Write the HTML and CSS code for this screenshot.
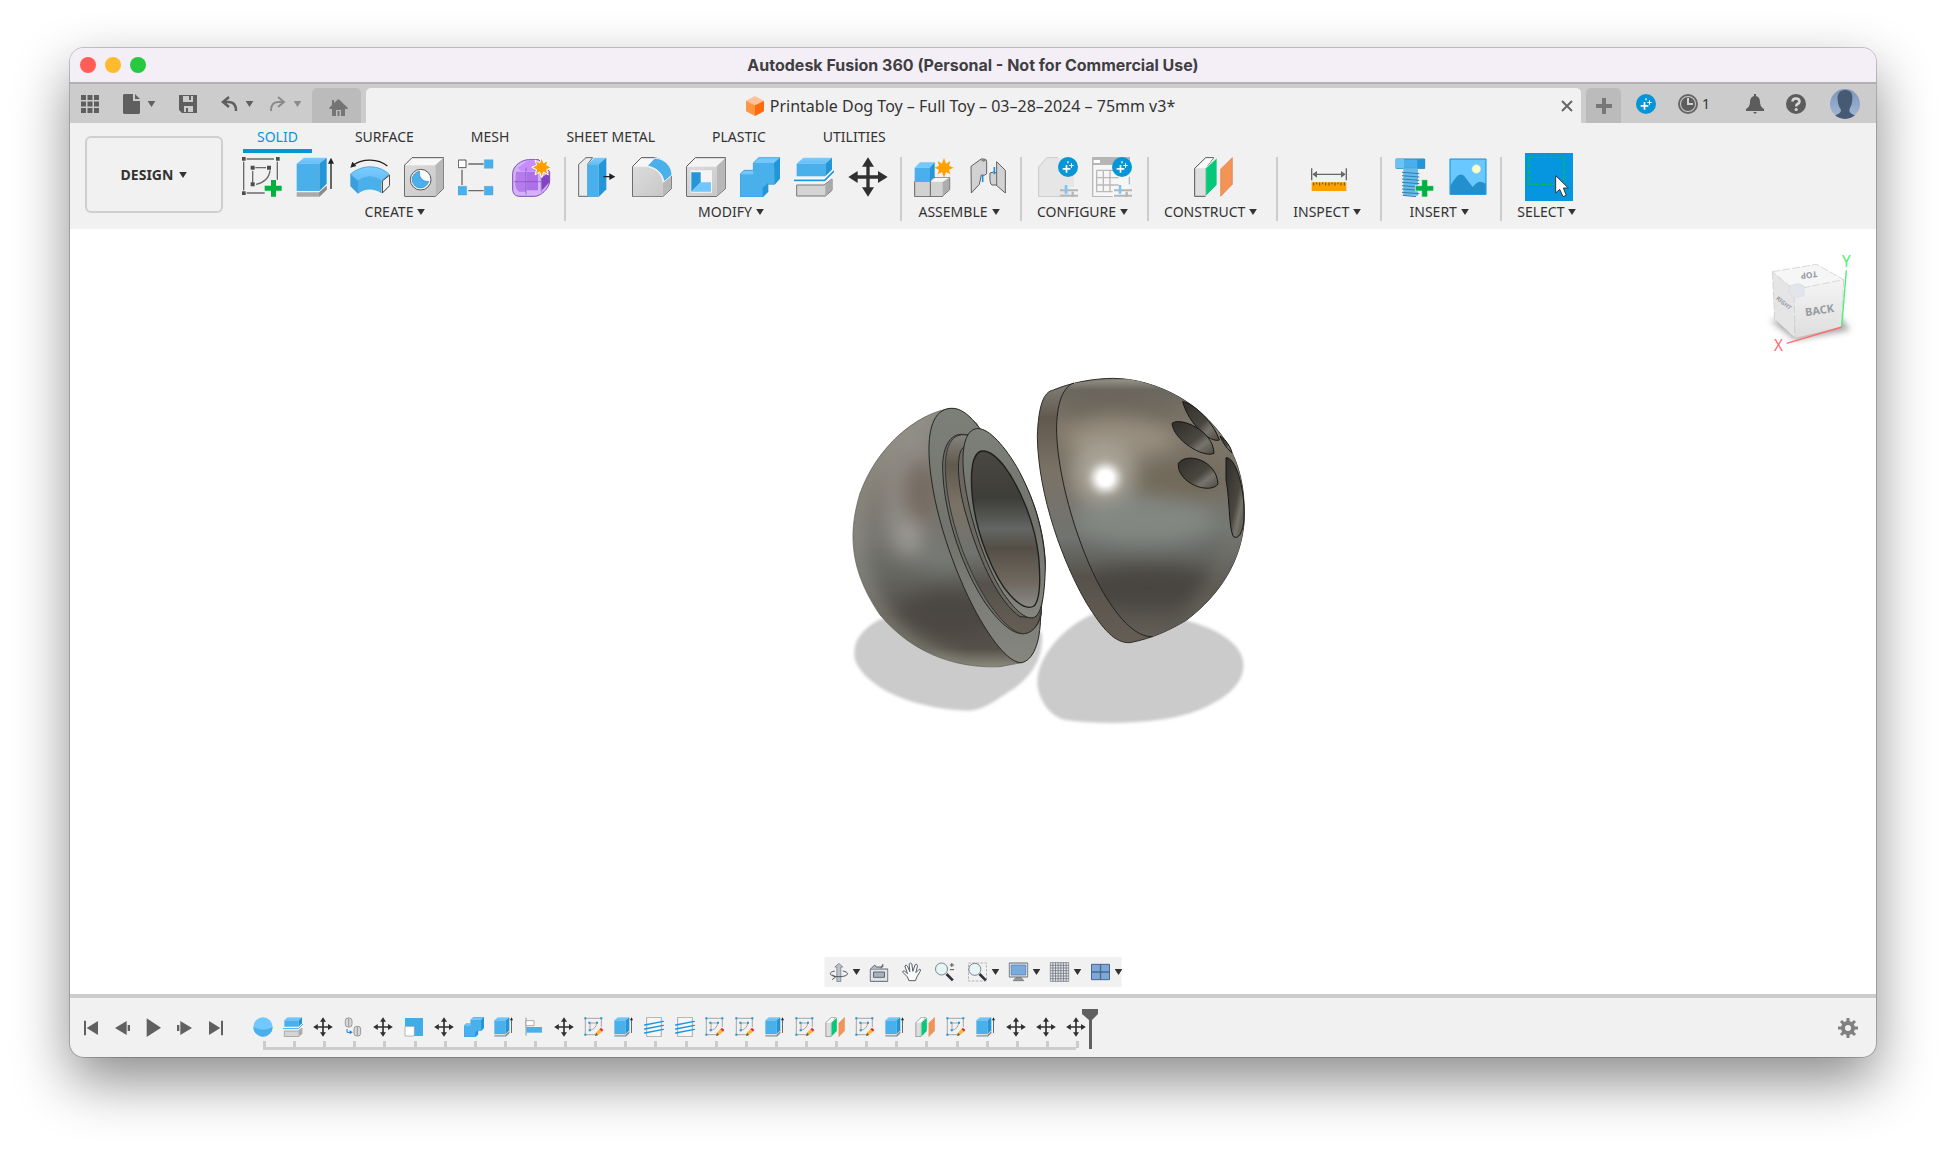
FILE: index.html
```html
<!DOCTYPE html>
<html lang="en">
<head>
<meta charset="utf-8">
<title>Autodesk Fusion 360</title>
<link rel="stylesheet" href="styles.css">
</head>
<body>
<svg class="sprite" aria-hidden="true">
  <defs>
    <linearGradient id="blue-top" x1="0" y1="0" x2="0" y2="1"><stop offset="0" stop-color="#7cccff"/><stop offset="1" stop-color="#63bef5"/></linearGradient>
    <linearGradient id="grey-face" x1="0" y1="0" x2="1" y2="1"><stop offset="0" stop-color="#dcdcdc"/><stop offset="1" stop-color="#c8c8c8"/></linearGradient>
  </defs>
  <symbol id="caret" viewBox="0 0 9 7"><path d="M0 0H9L4.500 7Z" fill="currentColor"/></symbol>
  <symbol id="sketch-new" viewBox="0 0 120 120">
    <g fill="none" stroke="#6a6a6a" stroke-width="4"><path d="M14 6H96M5 14V100M106 14V68M14 108H68M40 32H72M32 42V76M84 40C82 62 66 78 42 82"/></g>
    <path d="M0 0h11v11H0zM102 0h11v11h-11zM0 103h11v11H0zM26 26h12v12H26zM75 26h12v12H75zM26 76h12v12H26z" fill="#4d4d4d"/>
    <path d="M87 69h15v17h17v15h-17v18H87v-18H68V86h19z" fill="#00b140"/>
  </symbol>
  <symbol id="extrude" viewBox="0 0 120 120">
    <path d="M2 106H70L92 86V98L70 119H2Z" fill="#aaa"/><path d="M70 106L92 86V98L70 119Z" fill="#8b8b8b"/>
    <path d="M2 20L24 2H92L70 20Z" fill="url(#blue-top)"/><path d="M2 20H70V102H2Z" fill="#4ab0ec"/><path d="M70 20L92 2V80L70 102Z" fill="#2296d6"/>
    <path d="M105 96V16" stroke="#222" stroke-width="4"/><path d="M96 20L105 2L114 20Z" fill="#222"/>
  </symbol>
  <symbol id="revolve" viewBox="0 0 120 120">
    <path d="M10 24C38 4 84 4 112 27" fill="none" stroke="#222" stroke-width="4"/><path d="M1 32L7 14L19 27Z" fill="#222"/>
    <path d="M1 52C34 22 88 22 117 52L94 72C72 56 46 56 24 72Z" fill="url(#blue-top)" stroke="#2a93d0" stroke-width="2"/>
    <path d="M1 52L24 72V110L1 88Z" fill="#3a9fdc"/><path d="M24 72C46 56 72 56 94 72V109C72 94 46 94 24 110Z" fill="#4ab0ec"/>
    <path d="M97 72L119 54V86L97 108Z" fill="#f2f2f2" stroke="#333" stroke-width="3"/>
  </symbol>
  <symbol id="hole" viewBox="0 0 120 120">
    <path d="M2 24L24 2H119V94L94 118H2Z" fill="#f7f7f7" stroke="#555" stroke-width="3"/><path d="M3 25H94V117H3Z" fill="url(#grey-face)"/><path d="M94 24L118 3V93L94 117Z" fill="#b8b8b8"/>
    <circle cx="50" cy="68" r="31" fill="#fafafa" stroke="#555" stroke-width="3"/><path d="M47 43A25 25 0 1 0 74 73A24 24 0 0 1 47 43Z" fill="#4ab0ec" stroke="#2a86bd" stroke-width="2"/>
  </symbol>
  <symbol id="pattern" viewBox="0 0 120 120">
    <path d="M31 21H77M31 101H77M12 38V84" stroke="#6a6a6a" stroke-width="4"/><path d="M1 9h23v23H1z" fill="#fff" stroke="#555" stroke-width="3"/><path d="M79 8h26v26H79zM0 88h26v26H0zM79 88h26v26H79z" fill="#4ab0ec" stroke="#3797d3" stroke-width="1"/>
  </symbol>
  <symbol id="form" viewBox="0 0 120 120">
    <path d="M2 50C2 26 30 8 50 8H80L113 44V72C112 96 84 118 68 118H24C8 118 2 108 2 96Z" fill="#d3b2f7" stroke="#7f4bb8" stroke-width="3"/>
    <path d="M18 32L48 10H78L88 36L76 42H26Z" fill="#c98cff"/><path d="M12 44H42V104H22Q8 96 10 72Z" fill="#b57cee"/><path d="M44 44H78V100H44Z" fill="#ad70e8"/><path d="M88 62L112 46V76L90 100Z" fill="#8244c4"/>
    <path d="M42 32V112M6 74H88M88 60V104" stroke="#7f4bb8" stroke-width="2"/>
    <path d="M89 0L95 18L109 9L104 24L119 31L104 38L109 54L95 45L89 62L83 45L69 54L74 38L59 31L74 24L69 9L83 18Z" fill="#ffa000" stroke="#fff" stroke-width="3"/>
  </symbol>
  <symbol id="press" viewBox="0 0 120 120">
    <path d="M2 22L24 2H44L30 20V118H2Z" fill="#ececec" stroke="#666" stroke-width="3"/><path d="M29 22L50 2H85L62 22Z" fill="url(#blue-top)"/><path d="M28 22H62V120H28Z" fill="#4ab0ec"/><path d="M62 22L85 2V97L62 120Z" fill="#2296d6"/>
    <path d="M76 59H98" stroke="#222" stroke-width="4"/><path d="M94 49L112 59L94 69Z" fill="#222"/>
  </symbol>
  <symbol id="fillet" viewBox="0 0 120 120">
    <path d="M2 28L28 2H68C100 8 119 30 119 60V94L92 119H2Z" fill="#f7f7f7" stroke="#555" stroke-width="3"/><path d="M3 29H42C74 34 92 54 92 78V118H3Z" fill="url(#grey-face)"/><path d="M92 78L118 56V93L92 117Z" fill="#b8b8b8"/><path d="M46 27L68 3C102 6 119 30 120 54L96 74C92 48 72 32 46 27Z" fill="#4ab0ec" stroke="#f1f1f1" stroke-width="3"/>
  </symbol>
  <symbol id="shell" viewBox="0 0 120 120">
    <path d="M2 28L28 2H119V94L92 118H2Z" fill="#f4f4f4" stroke="#555" stroke-width="3"/><path d="M3 29H92V117H3Z" fill="url(#grey-face)"/><path d="M92 28L118 3V93L92 117Z" fill="#b8b8b8"/><path d="M14 40H78V107H14Z" fill="#f4f4f4"/><path d="M16 46H44V76L16 104Z" fill="#2296d6"/><path d="M44 76H75V104H16Z" fill="#70c6fd"/>
  </symbol>
  <symbol id="combine" viewBox="0 0 120 120">
    <path d="M0 52L12 40H40V18L56 2H120V64L104 82H84V104L68 120H0Z" fill="#4ab0ec"/><path d="M0 52L12 40H40V52ZM40 18L56 2H120L102 18Z" fill="#74c8ff"/><path d="M102 18L120 2V64L104 82ZM68 92L84 78V104L68 120Z" fill="#2296d6"/><path d="M0 52L12 40H40V18L56 2H120V64L104 82H84V104L68 120H0Z" fill="none" stroke="#2d94cf" stroke-width="2"/>
  </symbol>
  <symbol id="split" viewBox="0 0 120 120">
    <path d="M8 20L28 2H114L94 20Z" fill="url(#blue-top)"/><path d="M8 20H94V58H8Z" fill="#4ab0ec"/><path d="M94 20L114 2V38L94 58Z" fill="#2296d6"/><path d="M8 84H90L114 66V100L94 117H8Z" fill="#d4d4d4" stroke="#777" stroke-width="3"/><path d="M94 84L113 66V100L94 115Z" fill="#aaa"/><path d="M0 70H92L120 42" fill="none" stroke="#fff" stroke-width="11"/><path d="M0 70H92L120 42" fill="none" stroke="#1696e6" stroke-width="5"/>
  </symbol>
  <symbol id="move" viewBox="0 0 120 120"><path d="M60 1L78 29H65V55H90V42L119 60L90 78V65H65V91H78L60 119L42 91H55V65H29V78L1 60L29 42V55H55V29H42Z" fill="#303030"/></symbol>
  <symbol id="assemble" viewBox="0 0 120 120">
    <path d="M2 74V119H84L107 98V62H54Z" fill="#d2d2d2" stroke="#666" stroke-width="3"/><path d="M50 74H86L106 62H64Z" fill="#f7f7f7"/><path d="M86 76L106 62V97L86 118Z" fill="#adadad"/><path d="M49 72V119" stroke="#666" stroke-width="3"/><path d="M2 32L18 16H62L50 32Z" fill="#74c8ff"/><path d="M2 32H48V75H2Z" fill="#4ab0ec"/><path d="M48 32L62 16V58L48 75Z" fill="#2296d6"/>
    <path d="M90 2L96 20L109 12L105 26L119 32L105 38L109 52L96 45L90 62L84 45L71 52L75 38L61 32L75 26L71 12L84 20Z" fill="#ffa000"/>
  </symbol>
  <symbol id="joint" viewBox="0 0 120 120">
    <g fill="#d2d2d2" stroke="#606060" stroke-width="3"><path d="M9 28L34 10Q38 4 48 6Q56 6 56 14V50Q50 58 40 54L34 82L10 108Z"/><path d="M86 14L112 40V108L84 84L72 84Q64 82 66 48Q76 42 86 48Z"/></g><path d="M38 10Q46 2 55 10Q48 18 38 10Z" fill="#888"/><path d="M86 48V84" stroke="#666" stroke-width="3"/><path d="M44 54V75M79 30V52" stroke="#1696e6" stroke-width="5"/>
  </symbol>
  <symbol id="badge" viewBox="0 0 60 60"><circle cx="30" cy="30" r="30" fill="#0696d7"/><path d="M23 24h5v9h9v5h-9v9h-5v-9h-9v-5h9zM39 19h3v5h5v3h-5v5h-3v-5h-5v-3h5zM28 13h4v6h-4z" fill="#fff"/></symbol>
  <symbol id="configure" viewBox="0 0 120 120">
    <path d="M2 30L26 3H94L108 20V90H94V119H2Z" fill="#e6e6e6"/><path d="M60 2H26L2 30V119H66" fill="none" stroke="#c9c9c9" stroke-width="3"/><path d="M66 100H120M66 116H120" stroke="#b5b5b5" stroke-width="6"/><path d="M84 84V110" stroke="#7cc5f5" stroke-width="8"/><path d="M104 104V120" stroke="#b5b5b5" stroke-width="7"/><use href="#badge" x="60" y="0" width="60" height="60"/>
  </symbol>
  <symbol id="table" viewBox="0 0 120 120">
    <path d="M2 2H112V119H2Z" fill="#f6f6f6"/><path d="M0 0H114V24H0Z" fill="#b5b5b5"/><path d="M5 9H24V18H5Z" fill="#fff"/><path d="M2 24V119H62M112 60V82M14 40H68M14 62H80M14 84H80M14 104H62M14 40V104M34 40V104M54 40V104" fill="none" stroke="#b9b9b9" stroke-width="4"/><path d="M66 100H120M66 116H120" stroke="#b5b5b5" stroke-width="6"/><path d="M84 84V110" stroke="#7cc5f5" stroke-width="8"/><path d="M104 104V120" stroke="#b5b5b5" stroke-width="7"/><use href="#badge" x="60" y="0" width="60" height="60"/>
  </symbol>
  <symbol id="plane" viewBox="0 0 120 120">
    <path d="M5 34L38 2H62L38 34V118H5Z" fill="#dedede" stroke="#555" stroke-width="3"/><path d="M8 34L40 4H60L38 34Z" fill="#fafafa"/><path d="M38 34L72 2V84L38 118Z" fill="#06c878" stroke="#fff" stroke-width="2"/><path d="M83 36L118 2V82L83 118Z" fill="#f39356" stroke="#d98049" stroke-width="2"/>
  </symbol>
  <symbol id="inspect" viewBox="0 0 120 120"><path d="M8 34V70M112 34V70M14 52H106" stroke="#666" stroke-width="4"/><path d="M10 52L24 42V62ZM110 52L96 42V62Z" fill="#666"/><path d="M8 76H112V102H8Z" fill="#ffa000"/><path d="M14 76v10M23 76v6M32 76v10M41 76v6M50 76v10M60 76v10M69 76v6M78 76v10M87 76v6M96 76v10M106 76v10" stroke="#704d14" stroke-width="3"/></symbol>
  <symbol id="bolt" viewBox="0 0 120 120">
    <path d="M6 6H92V34H6Z" fill="#4ab0ec" stroke="#2a86bd" stroke-width="3"/><path d="M6 6H30V34H6Z" fill="#6bc2f6"/><path d="M70 6H92V34H70Z" fill="#2296d6"/><path d="M28 34H72V116H28Z" fill="#63bbee"/><path d="M24 46L76 50M24 56L76 60M24 66L76 70M24 76L76 80M24 86L76 90M24 96L76 100M24 106L76 110M26 115L66 119" stroke="#397da6" stroke-width="3"/><path d="M83 68h18v18h18v16h-18v18H83v-18H64V86h19z" fill="#00b140" stroke="#f1f1f1" stroke-width="2"/>
  </symbol>
  <symbol id="picture" viewBox="0 0 120 120"><path d="M6 6H114V112H6Z" fill="#68c8ff" stroke="#0c8fd6" stroke-width="3"/><path d="M7 86C26 56 34 46 48 56L74 90C88 72 98 70 113 80V111H7Z" fill="#2390cd"/><circle cx="85" cy="36" r="13" fill="#ffffc8" stroke="#cce1c7" stroke-width="2"/></symbol>
  <symbol id="select" viewBox="0 0 144 144"><path d="M13 13H117V94H13Z" fill="none" stroke="#00c24a" stroke-width="4" stroke-dasharray="13 7"/><path d="M92 68V120L104 109L114 131L124 127L115 105H130Z" fill="#fff" stroke="#333" stroke-width="3"/></symbol>
  <symbol id="t-sketch" viewBox="0 0 60 60"><path d="M4 4H52V30M4 4V53H34M16 18H38Q36 36 18 40V18" fill="none" stroke="#808080" stroke-width="2"/><path d="M1 1h6v6H1zM49 1h6v6h-6zM1 50h6v6H1zM13 14h6v6h-6zM36 14h6v6h-6zM14 37h6v6h-6z" fill="#1696e6"/><path d="M33 57L36 47L46 37L54 44L42 54Z" fill="#ffb62e"/><path d="M46 37L51 32L58 39L54 44Z" fill="#f02b2b"/><path d="M33 57L36 47L42 54Z" fill="#555"/></symbol>
  <symbol id="t-thread" viewBox="0 0 60 60"><path d="M8 1H52V59H8Z" fill="#f6f6f6" stroke="#888" stroke-width="2"/><path d="M2 24L58 13M2 36L58 25M2 48L58 37" stroke="#1696e6" stroke-width="4" stroke-linecap="round"/></symbol>
  <symbol id="t-sphere" viewBox="0 0 60 60"><circle cx="30" cy="30" r="29" fill="#70c8ff"/><path d="M1 30Q30 46 59 30A29 29 0 0 1 1 30Z" fill="#4ab0ec"/></symbol>
  <symbol id="t-scale" viewBox="0 0 60 60"><path d="M3 3H57V57H3Z" fill="#42abe9"/><path d="M3 28H31V57H3Z" fill="#fff" stroke="#999" stroke-width="2"/></symbol>
  <symbol id="t-align" viewBox="0 0 60 60"><path d="M6 2V56" stroke="#999" stroke-width="3"/><path d="M6 11H30V26H6Z" fill="#fff" stroke="#888" stroke-width="2"/><path d="M7 30H54V47H7Z" fill="#4ab0ec"/></symbol>
  <symbol id="t-copy" viewBox="0 0 60 60"><g fill="#d8d8dc" stroke="#777" stroke-width="2"><rect x="7" y="3" width="20" height="27" rx="8"/><rect x="33" y="28" width="20" height="29" rx="8"/><path d="M17 5V28M43 30V55"/></g><path d="M12 36V46H22" fill="none" stroke="#1c7fd8" stroke-width="3"/><path d="M20 40L29 46L20 52Z" fill="#1c7fd8"/></symbol>
</svg>

<main class="window">
  <header class="titlebar">
    <div class="lights"><button class="light light-close" aria-label="Close window"></button><button class="light light-min" aria-label="Minimise"></button><button class="light light-max" aria-label="Zoom"></button></div>
    <h1>Autodesk Fusion 360 (Personal - Not for Commercial Use)</h1>
  </header>

  <div class="appbar">
    <div class="quick">
      <button class="q-grid" aria-label="Data panel"><svg width="18" height="18" viewBox="0 0 18 18" fill="#5f5f5f"><path d="M0 0h5v5H0zM6.500 0h5v5h-5zM13 0h5v5h-5zM0 6.500h5v5H0zM6.500 6.500h5v5h-5zM13 6.500h5v5h-5zM0 13h5v5H0zM6.500 13h5v5h-5zM13 13h5v5h-5z"/></svg></button>
      <button class="q-file" aria-label="File"><svg width="17" height="20" viewBox="0 0 17 20" fill="#5f5f5f"><path d="M1 0H10V7H17V19L16 20H1L0 19V1ZM12 0L17 5H12Z"/></svg><svg class="caret"><use href="#caret"/></svg></button>
      <button class="q-save" aria-label="Save"><svg width="18" height="18" viewBox="0 0 18 18"><path d="M0 0H18V18H3L0 15Z" fill="#5f5f5f"/><path d="M4 1H14V7H4ZM5 11H14V17H5Z" fill="#ccc"/><path d="M10 1H12V5H10ZM7 13H9V17H7Z" fill="#5f5f5f"/></svg></button>
      <button class="q-undo" aria-label="Undo"><svg width="17" height="15" viewBox="0 0 17 15"><path d="M8 1L2 6L8 11M2 6H8Q15 6 15 15" fill="none" stroke="#5f5f5f" stroke-width="2.500"/></svg><svg class="caret"><use href="#caret"/></svg></button>
      <button class="q-redo" aria-label="Redo"><svg width="17" height="15" viewBox="0 0 17 15"><path d="M9 1L15 6L9 11M15 6H9Q2 6 2 15" fill="none" stroke="currentColor" stroke-width="2"/></svg><svg class="caret"><use href="#caret"/></svg></button>
    </div>
    <button class="tab home" aria-label="Home"><svg width="19" height="17" viewBox="0 0 19 17" fill="#757575"><path d="M9.500 0L19 9L18 10H16V17H12V11H7V17H3V10H1L0 9L3 6V1H5V4ZM8.500 12H10.500V17H8.500Z"/></svg></button>
    <div class="tab document">
      <svg width="18" height="20" viewBox="0 0 54 60"><path d="M27 0L54 14L27 28L0 14Z" fill="#ffc197"/><path d="M0 14L27 28V60L0 46Z" fill="#ff9540"/><path d="M54 14L27 28V60L54 46Z" fill="#ff6a0d"/></svg>
      <span>Printable Dog Toy – Full Toy – 03–28–2024 – 75mm v3*</span>
      <button class="close" aria-label="Close tab"><svg width="12" height="12" viewBox="0 0 12 12"><path d="M1 1L11 11M11 1L1 11" stroke="#666" stroke-width="2"/></svg></button>
    </div>
    <button class="tab plus" aria-label="New design"><svg width="16" height="16" viewBox="0 0 16 16"><path d="M8 0V16M0 8H16" stroke="#777" stroke-width="4"/></svg></button>
    <div class="account">
      <button aria-label="Extensions"><svg width="20" height="20"><use href="#badge"/></svg></button>
      <button class="jobs"><svg width="20" height="20" viewBox="0 0 20 20"><circle cx="10" cy="10" r="9" fill="none" stroke="#666" stroke-width="2"/><circle cx="10" cy="10" r="7" fill="#5c5c5c"/><path d="M10 4V10H15" fill="none" stroke="#d2d2d2" stroke-width="2"/></svg>1</button>
      <button class="bell" aria-label="Notifications"><svg width="18" height="20" viewBox="0 0 18 20" fill="#5c5c5c"><path d="M8 0H10V2Q14 3 14 8Q14 13 18 15V17H0V15Q4 13 4 8Q4 3 8 2ZM7 18H11L9 20Z"/></svg></button>
      <button class="help" aria-label="Help"><svg width="20" height="20" viewBox="0 0 20 20"><circle cx="10" cy="10" r="10" fill="#5c5c5c"/><path d="M6.500 7.500Q6.500 4.500 10 4.500Q13.500 4.500 13.500 7.500Q13.500 9 11.500 10Q10.200 10.700 10.200 12.500" fill="none" stroke="#d8d8d8" stroke-width="2.600"/><circle cx="10.200" cy="15.500" r="1.600" fill="#d8d8d8"/></svg></button>
      <button class="avatar" aria-label="Profile"><svg width="30" height="30" viewBox="0 0 90 90"><defs><linearGradient id="sky" x1="0" y1="0" x2="0" y2="1"><stop offset="0" stop-color="#7b97bb"/><stop offset="1" stop-color="#a5b9d5"/></linearGradient><clipPath id="disc"><circle cx="45" cy="45" r="45"/></clipPath></defs><g clip-path="url(#disc)"><path d="M0 0H90V90H0Z" fill="url(#sky)"/><path d="M45 3C62 3 69 14 67 32C66 48 60 56 58 62C58 72 66 76 80 80V90H10V80C24 76 33 72 33 62C28 56 24 46 23 32C21 14 30 3 45 3Z" fill="#475a73"/></g></svg></button>
    </div>
  </div>

  <div class="ribbon">
    <button class="workspace">DESIGN <svg class="caret"><use href="#caret"/></svg></button>
    <div class="tools">
      <nav class="modes"><a class="active" href="#solid">SOLID</a><a href="#surface">SURFACE</a><a href="#mesh">MESH</a><a href="#sheet">SHEET METAL</a><a href="#plastic">PLASTIC</a><a href="#utilities">UTILITIES</a></nav>
      <div class="panels">
        <section class="panel"><div class="icons"><button aria-label="Create sketch"><svg><use href="#sketch-new"/></svg></button><button aria-label="Extrude"><svg><use href="#extrude"/></svg></button><button aria-label="Revolve"><svg><use href="#revolve"/></svg></button><button aria-label="Hole"><svg><use href="#hole"/></svg></button><button aria-label="Pattern"><svg><use href="#pattern"/></svg></button><button aria-label="Create form"><svg><use href="#form"/></svg></button></div><button class="label">CREATE<svg class="caret"><use href="#caret"/></svg></button></section>
        <section class="panel"><div class="icons"><button aria-label="Press pull"><svg><use href="#press"/></svg></button><button aria-label="Fillet"><svg><use href="#fillet"/></svg></button><button aria-label="Shell"><svg><use href="#shell"/></svg></button><button aria-label="Combine"><svg><use href="#combine"/></svg></button><button aria-label="Split body"><svg><use href="#split"/></svg></button><button aria-label="Move"><svg><use href="#move"/></svg></button></div><button class="label">MODIFY<svg class="caret"><use href="#caret"/></svg></button></section>
        <section class="panel"><div class="icons"><button aria-label="New component"><svg><use href="#assemble"/></svg></button><button aria-label="Joint"><svg><use href="#joint"/></svg></button></div><button class="label">ASSEMBLE<svg class="caret"><use href="#caret"/></svg></button></section>
        <section class="panel"><div class="icons"><button aria-label="Configure"><svg><use href="#configure"/></svg></button><button aria-label="Configuration table"><svg><use href="#table"/></svg></button></div><button class="label">CONFIGURE<svg class="caret"><use href="#caret"/></svg></button></section>
        <section class="panel"><div class="icons"><button aria-label="Offset plane"><svg><use href="#plane"/></svg></button></div><button class="label">CONSTRUCT<svg class="caret"><use href="#caret"/></svg></button></section>
        <section class="panel"><div class="icons"><button aria-label="Measure"><svg><use href="#inspect"/></svg></button></div><button class="label">INSPECT<svg class="caret"><use href="#caret"/></svg></button></section>
        <section class="panel"><div class="icons"><button aria-label="Insert fastener"><svg><use href="#bolt"/></svg></button><button aria-label="Canvas"><svg><use href="#picture"/></svg></button></div><button class="label">INSERT<svg class="caret"><use href="#caret"/></svg></button></section>
        <section class="panel"><div class="icons"><button class="selected" aria-label="Select"><svg><use href="#select"/></svg></button></div><button class="label">SELECT<svg class="caret"><use href="#caret"/></svg></button></section>
      </div>
    </div>
  </div>

  <section class="viewport">
    <svg class="model" viewBox="0 0 1350 1200" role="img" aria-label="Two halves of a ball toy">
      <defs>
        <linearGradient id="shade-left" x1="0" y1="0" x2="0" y2="1"><stop offset="0" stop-color="#8c8a82"/><stop offset=".3" stop-color="#7c756b"/><stop offset=".5" stop-color="#777671"/><stop offset=".65" stop-color="#656661"/><stop offset=".8" stop-color="#504c46"/><stop offset=".93" stop-color="#56524a"/><stop offset="1" stop-color="#8c8a7c"/></linearGradient>
        <linearGradient id="shade-right" x1="0" y1="0" x2="0" y2="1"><stop offset="0" stop-color="#a3a296"/><stop offset=".05" stop-color="#6b685f"/><stop offset=".18" stop-color="#807669"/><stop offset=".4" stop-color="#777165"/><stop offset=".56" stop-color="#757874"/><stop offset=".66" stop-color="#686966"/><stop offset=".8" stop-color="#4e4b45"/><stop offset="1" stop-color="#66625a"/></linearGradient>
        <linearGradient id="bore" x1="0" y1="0" x2="0" y2="1"><stop offset="0" stop-color="#4a4843"/><stop offset=".3" stop-color="#3d3d39"/><stop offset=".5" stop-color="#636663"/><stop offset=".62" stop-color="#544f46"/><stop offset=".85" stop-color="#716a61"/><stop offset="1" stop-color="#8a8a85"/></linearGradient>
        <linearGradient id="rim" x1="0" y1="0" x2="0" y2="1"><stop offset="0" stop-color="#7d7f79"/><stop offset=".5" stop-color="#72736d"/><stop offset="1" stop-color="#85877f"/></linearGradient>
        <linearGradient id="band" x1="0" y1="0" x2="0" y2="1"><stop offset="0" stop-color="#84847e"/><stop offset=".15" stop-color="#62594e"/><stop offset=".35" stop-color="#7b7266"/><stop offset=".6" stop-color="#707370"/><stop offset=".75" stop-color="#56524b"/><stop offset="1" stop-color="#655e55"/></linearGradient>
        <linearGradient id="pit" x1="0" y1="0" x2="1" y2="1"><stop offset="0" stop-color="#302e29"/><stop offset=".55" stop-color="#4a4740"/><stop offset=".72" stop-color="#77746c"/><stop offset="1" stop-color="#4c4942"/></linearGradient>
        <filter id="soft" x="-50%" y="-50%" width="200%" height="200%" color-interpolation-filters="sRGB"><feGaussianBlur stdDeviation="30"/></filter>
        <filter id="edge" x="-10%" y="-10%" width="120%" height="120%"><feGaussianBlur stdDeviation="4"/></filter>
        <filter id="spark" x="-50%" y="-50%" width="200%" height="200%"><feGaussianBlur stdDeviation="13"/></filter>
        <path id="left-body" d="M392 175C290 190 170 290 120 430C80 560 95 670 180 795C290 925 430 955 540 950L605 938L640 900L560 400L470 220Z"/>
        <path id="right-body" d="M700 120C760 95 830 85 880 85C970 86 1050 122 1100 155C1160 195 1215 260 1236 308C1266 370 1276 440 1272 520C1262 630 1205 730 1100 810C1050 840 1000 864 930 878C885 880 850 840 800 760C730 640 655 440 652 260C655 170 670 125 700 120Z"/>
        <path id="cap" d="M762 99C722 112 708 180 710 250C715 400 780 600 840 710C890 800 945 862 998 860L1300 860V60Z"/>
        <clipPath id="clip-left"><use href="#left-body"/></clipPath><clipPath id="clip-right"><use href="#right-body"/></clipPath><clipPath id="clip-cap"><use href="#cap"/></clipPath>
      </defs>
      <g fill="#cbcbcb" filter="url(#edge)"><path d="M180 808C120 840 95 880 105 930C135 1010 270 1075 440 1082C500 1080 540 1040 590 1010C640 970 672 920 665 850L600 800Z"/><path d="M820 792C730 830 650 920 652 1000C655 1050 690 1100 735 1110C850 1125 1010 1122 1110 1090C1210 1055 1275 1005 1270 940C1265 880 1190 835 1095 810Z"/></g>
      <g clip-path="url(#clip-left)"><use href="#left-body" fill="url(#shade-left)"/><g filter="url(#soft)"><path d="M340 175C200 240 80 420 100 600C140 790 240 900 400 950" fill="none" stroke="#95958a" stroke-width="36"/><path d="M330 215C230 270 190 350 190 450Q200 600 260 620Q310 600 290 500Q250 420 330 320Z" fill="#979490" opacity=".7"/><ellipse cx="295" cy="430" rx="40" ry="100" fill="#74695f"/><ellipse cx="270" cy="560" rx="32" ry="60" fill="#a09e99"/><ellipse cx="370" cy="620" rx="80" ry="30" fill="#7a7e7a"/><ellipse cx="390" cy="790" rx="140" ry="70" fill="#4b4742"/></g></g>
      <use href="#left-body" fill="none" stroke="#55554e" stroke-width="2"/>
      <path d="M392 175C340 178 322 240 328 330C338 480 400 660 470 790C520 880 570 940 605 938C640 930 660 880 662 800L676 640C672 540 640 420 560 310L480 236C450 195 420 172 392 175Z" fill="url(#rim)" stroke="#262622" stroke-width="3"/>
      <path d="M450 257C400 240 372 275 368 340C366 470 420 640 490 750C530 810 580 860 618 850C640 845 660 820 664 790L620 500Z" fill="#6b6e67" stroke="#262622" stroke-width="3"/>
      <path d="M450 257C402 245 380 275 376 340C374 470 430 640 500 750C540 810 585 858 618 850C640 845 660 820 664 780L620 500Z" fill="url(#band)" stroke="#35342f" stroke-width="3"/>
      <path d="M434 290C405 300 412 410 440 500C480 640 540 760 600 800L640 803L500 500Z" fill="#6a6861" stroke="#262622" stroke-width="3"/>
      <path d="M470 236C437 240 425 290 430 360C440 480 490 640 550 730C585 780 615 808 640 803C664 796 674 740 676 650C672 540 640 440 590 350C545 275 500 232 470 236Z" fill="url(#rim)" stroke="#262622" stroke-width="3"/>
      <path d="M488 303C455 305 450 370 457 440C468 550 520 680 570 735C600 768 625 778 642 768C660 750 662 690 656 620C645 520 600 410 550 345C525 315 505 302 488 303Z" fill="url(#bore)" stroke="#1e1e1b" stroke-width="4"/>
      <use href="#right-body" fill="url(#band)" stroke="#2e2d29" stroke-width="3"/>
      <g clip-path="url(#clip-right)"><g clip-path="url(#clip-cap)"><path d="M650 80H1280V880H650Z" fill="url(#shade-right)"/><g filter="url(#soft)"><path d="M740 190Q870 110 1060 210" fill="none" stroke="#655f56" stroke-width="30"/><ellipse cx="900" cy="265" rx="170" ry="55" fill="#998f80"/><ellipse cx="850" cy="370" rx="95" ry="95" fill="#a8a397"/><ellipse cx="1080" cy="390" rx="130" ry="50" fill="#716959"/><ellipse cx="970" cy="510" rx="210" ry="70" fill="#838883"/><ellipse cx="990" cy="710" rx="210" ry="55" fill="#484540"/><path d="M1240 300Q1325 560 1115 800" fill="none" stroke="#77766c" stroke-width="30"/></g><circle cx="856" cy="384" r="40" fill="#fff" filter="url(#spark)"/><circle cx="856" cy="384" r="24" fill="#fff" filter="url(#edge)"/></g></g>
      <path d="M762 99C722 112 708 180 710 250C715 400 780 600 840 710C890 800 945 862 998 860" fill="none" stroke="#22221f" stroke-width="3"/>
      <g fill="url(#pit)" stroke="#171714" stroke-width="3"><path d="M1088 155C1110 155 1175 205 1198 270C1170 280 1105 220 1088 155Z"/><path d="M1056 220C1080 200 1180 240 1182 310C1150 325 1060 270 1056 220Z"/><path d="M1075 340C1100 305 1190 330 1194 402C1170 435 1070 400 1075 340Z"/><path d="M1200 258C1218 270 1232 290 1236 308C1224 300 1210 282 1200 258Z"/><path d="M1218 323C1245 320 1275 410 1272 500C1272 540 1258 568 1242 561C1226 545 1230 450 1218 390Z"/></g>
    </svg>
    <svg class="viewcube" viewBox="0 0 330 345" role="img" aria-label="View cube">
      <defs><filter id="cube-shadow" x="-20%" y="-50%" width="140%" height="200%"><feGaussianBlur stdDeviation="9"/></filter><linearGradient id="cube-front" x1="0" y1="0" x2="0" y2="1"><stop offset="0" stop-color="#f4f4f5"/><stop offset="1" stop-color="#dedede"/></linearGradient></defs>
      <path d="M30 225L105 285L270 255L240 215Z" fill="#777" opacity=".65" filter="url(#cube-shadow)"/>
      <path d="M37 80L170 58L251 104L102 134Z" fill="#f6f6f7"/><path d="M37 80L102 134L105 279L44 222Z" fill="#e5e5e6"/><path d="M102 134L251 104L245 246L105 279Z" fill="url(#cube-front)"/>
      <path d="M37 80L170 58L251 104L102 134ZM37 80L44 222L105 279L102 134M251 104L245 246" fill="none" stroke="#c5c7cb" stroke-width="2" stroke-dasharray="24 6"/>
      <path d="M88 122L116 115L132 124V152L104 159L88 146Z" fill="#e3e5ea" stroke="#c6ccd6"/>
      <g fill="#989ba1" font-family="Noto Sans, sans-serif" font-weight="700"><text font-size="33" transform="translate(137 214) rotate(-9)">BACK</text><text font-size="25" transform="translate(170 78) rotate(172)">TOP</text><text font-size="17" transform="translate(47 162) rotate(39)">RIGHT</text></g>
      <path d="M259 76L245 246" stroke="#4af073" stroke-width="4"/><path d="M80 295L245 246" stroke="#ff6b70" stroke-width="4"/>
      <g font-family="Noto Sans, sans-serif" font-size="46"><text x="246" y="66" fill="#4af073">Y</text><text x="42" y="318" fill="#ff6b70">X</text></g>
    </svg>
    <div class="navbar">
      <button class="with-caret" aria-label="Orbit"><svg width="19" height="19" viewBox="0 0 57 57"><path d="M22 56V12H16L28 1L40 12H34V56Z" fill="#bcc3ce" stroke="#68707c" stroke-width="2"/><path d="M16 24C-6 28 -2 40 28 41C58 41 62 28 40 24M8 36L18 42L8 50" fill="none" stroke="#4b525b" stroke-width="3"/></svg><svg class="caret"><use href="#caret"/></svg></button>
      <button aria-label="Look at"><svg width="19" height="19" viewBox="0 0 57 57"><path d="M2 18H55V55H2Z" fill="#e0e3e8" stroke="#5d6671" stroke-width="3"/><path d="M12 27H45V43H12Z" fill="#aab1bd" stroke="#5d6671" stroke-width="3"/><path d="M4 17L16 6L20 12H40V4L34 16" fill="#b9bec7" stroke="#5d6671" stroke-width="3"/></svg></button>
      <button aria-label="Pan"><svg width="20" height="20" viewBox="0 0 60 60"><path d="M22 56L18 45L4 31Q3 25 9 27L18 35L10 12Q13 5 18 13L25 29L23 6Q28 0 31 6L34 28L41 8Q47 4 48 11L43 32L53 22Q60 21 56 28L46 45L42 56Z" fill="#fafafa" stroke="#59606a" stroke-width="3"/></svg></button>
      <button aria-label="Zoom"><svg width="20" height="20" viewBox="0 0 60 60"><circle cx="21" cy="21" r="18" fill="#e6f5f6" stroke="#7c8690" stroke-width="3"/><path d="M36 36L55 55" stroke="#2d3137" stroke-width="8"/><path d="M46 9H59M52 3V15M46 23H59" stroke="#555" stroke-width="3"/></svg></button>
      <button class="with-caret" aria-label="Fit"><svg width="20" height="20" viewBox="0 0 60 60"><path d="M3 3H57V57H3Z" fill="none" stroke="#999" stroke-width="2" stroke-dasharray="8 4"/><circle cx="22" cy="22" r="18" fill="#e6f5f6" stroke="#7c8690" stroke-width="3"/><path d="M36 36L55 55" stroke="#2d3137" stroke-width="8"/></svg><svg class="caret"><use href="#caret"/></svg></button>
      <button class="with-caret" aria-label="Display settings"><svg width="20" height="20" viewBox="0 0 60 60"><path d="M2 3H58V45H2Z" fill="#e7e8ea" stroke="#666d75" stroke-width="3"/><path d="M8 9H52V39H8Z" fill="#79abdc" stroke="#4e75a4" stroke-width="2"/><path d="M22 47H38L46 56H14Z" fill="#999" stroke="#666" stroke-width="2"/></svg><svg class="caret"><use href="#caret"/></svg></button>
      <button class="with-caret" aria-label="Grid"><svg width="20" height="20" viewBox="0 0 60 60"><path d="M2 2H58V58H2Z" fill="#e1e4e8"/><path d="M2 2H58V58H2ZM10 2V58M18 2V58M26 2V58M34 2V58M42 2V58M50 2V58M2 10H58M2 18H58M2 26H58M2 34H58M2 42H58M2 50H58" fill="none" stroke="#606872" stroke-width="2"/></svg><svg class="caret"><use href="#caret"/></svg></button>
      <button class="with-caret" aria-label="Viewports"><svg width="20" height="20" viewBox="0 0 60 60"><path d="M3 7H57V53H3Z" fill="#7da9da" stroke="#4d668a" stroke-width="3"/><path d="M30 6V54M2 30H58" stroke="#4d668a" stroke-width="4"/></svg><svg class="caret"><use href="#caret"/></svg></button>
    </div>
  </section>

  <footer class="timeline">
    <div class="playback">
      <button aria-label="Go to start"><svg viewBox="0 0 45 60"><path d="M3 8V52" stroke="#606060" stroke-width="6"/><path d="M42 9V51L8 30Z"/></svg></button>
      <button aria-label="Step back"><svg viewBox="0 0 45 60"><path d="M35 9V51L0 30ZM38 21H45V39H38Z"/></svg></button>
      <button aria-label="Play"><svg viewBox="0 0 45 60"><path d="M2 1V57L45 29Z"/></svg></button>
      <button aria-label="Step forward"><svg viewBox="0 0 45 60"><path d="M10 9V51L45 30ZM0 21H7V39H0Z"/></svg></button>
      <button aria-label="Go to end"><svg viewBox="0 0 45 60"><path d="M42 8V52" stroke="#606060" stroke-width="6"/><path d="M3 9V51L37 30Z"/></svg></button>
    </div>
    <ol class="features">
      <li><svg><use href="#t-sphere"/></svg></li><li><svg><use href="#split"/></svg></li><li><svg><use href="#move"/></svg></li><li><svg><use href="#t-copy"/></svg></li><li><svg><use href="#move"/></svg></li><li><svg><use href="#t-scale"/></svg></li><li><svg><use href="#move"/></svg></li><li><svg><use href="#combine"/></svg></li><li><svg><use href="#extrude"/></svg></li><li><svg><use href="#t-align"/></svg></li><li><svg><use href="#move"/></svg></li><li><svg><use href="#t-sketch"/></svg></li><li><svg><use href="#extrude"/></svg></li><li><svg><use href="#t-thread"/></svg></li><li><svg><use href="#t-thread"/></svg></li><li><svg><use href="#t-sketch"/></svg></li><li><svg><use href="#t-sketch"/></svg></li><li><svg><use href="#extrude"/></svg></li><li><svg><use href="#t-sketch"/></svg></li><li><svg><use href="#plane"/></svg></li><li><svg><use href="#t-sketch"/></svg></li><li><svg><use href="#extrude"/></svg></li><li><svg><use href="#plane"/></svg></li><li><svg><use href="#t-sketch"/></svg></li><li><svg><use href="#extrude"/></svg></li><li><svg><use href="#move"/></svg></li><li><svg><use href="#move"/></svg></li><li><svg><use href="#move"/></svg></li>
    </ol>
    <svg class="marker" viewBox="0 0 16 40"><path d="M0 0H16V5L10 11V40H7V11L0 5Z" fill="#606060"/></svg>
    <button class="settings" aria-label="Timeline settings"><svg width="20" height="20" viewBox="0 0 20 20"><circle cx="10" cy="10" r="5" fill="none" stroke="#808080" stroke-width="4"/><path d="M10 0V4M10 16V20M0 10H4M16 10H20M3 3L6 6M14 14L17 17M17 3L14 6M6 14L3 17" stroke="#808080" stroke-width="3"/></svg></button>
  </footer>
</main>
</body>
</html>
```
FILE: styles.css
```css
* { box-sizing: border-box; }

body {
  display: flex;
  min-height: 100vh;
  margin: 0;
  padding: 48px 70px 93px;
  background: #fff;
  color: #333;
  font: 14px/20px "Noto Sans", sans-serif;
}

button {
  display: flex;
  align-items: center;
  justify-content: center;
  padding: 0;
  border: 0;
  background: none;
  color: inherit;
  font: inherit;
}

svg { display: block; flex: none; }
.sprite { position: absolute; width: 0; height: 0; }
.caret { width: 8px; height: 6px; }

.window {
  display: flex;
  flex: 1;
  flex-direction: column;
  min-width: 0;
  overflow: hidden;
  border-radius: 14px;
  background: #f1f1f1;
  box-shadow: 0 0 0 1px rgba(0, 0, 0, .2), 0 24px 56px rgba(0, 0, 0, .46);
}

.titlebar {
  display: grid;
  grid-template-columns: 1fr auto 1fr;
  align-items: center;
  height: 36px;
  padding: 0 10px;
  border-bottom: 2px solid #b2b2b2;
  background: #f4eff6;
}
.titlebar h1 { margin: 0; color: #403e42; font: 700 16px/20px Inter, sans-serif; }
.lights { display: flex; gap: 9px; }
.light { width: 16px; height: 16px; border-radius: 50%; }
.light-close { background: #ff5d55; }
.light-min { background: #febb2d; }
.light-max { background: #28c840; }

.appbar {
  display: flex;
  align-items: flex-end;
  height: 39px;
  background: #ccc;
}
.quick { display: flex; align-items: center; align-self: stretch; width: 242px; padding-left: 11px; color: #5f5f5f; }
.quick button { gap: 7px; }
.quick .caret { width: 9px; height: 6px; }
.q-file { margin-left: 24px; }
.q-save { margin-left: 23px; }
.q-undo { margin-left: 24px; }
.q-redo { margin-left: 15px; color: #8b8b8b; }
.tab { height: 35px; border-radius: 5px 5px 0 0; background: #bbb; }
.home { width: 49px; margin-right: 5px; padding: 4px 0 0 4px; }
.document {
  display: flex;
  flex: 1;
  align-items: center;
  justify-content: center;
  gap: 6px;
  padding: 1px 8px 0 0;
  background: #f1f1f1;
  font-size: 16px;
}
.document span { margin-right: auto; }
.document > svg { margin-left: auto; }
.plus { width: 35px; margin-left: 5px; }
.account { display: flex; align-items: center; align-self: stretch; width: 255px; padding-left: 15px; }
.jobs { gap: 4px; margin-left: 22px; }
.bell { margin-left: 36px; }
.help { margin-left: 22px; }
.avatar { margin-left: 24px; }

.ribbon { display: flex; height: 106px; padding-left: 15px; }
.workspace {
  gap: 6px;
  width: 138px;
  height: 77px;
  margin: 13px 20px 0 0;
  border: 2px solid #cfcfcf;
  border-radius: 6px;
  font-weight: 700;
}
.modes { display: flex; gap: 29px; height: 34px; }
.modes a { padding: 4px 14px 0; color: #333; text-decoration: none; }
.modes .active { padding-bottom: 5px; border-bottom: 4px solid #0696d7; color: #0696d7; height: 30px; }
.panels { display: flex; margin-left: -13px; }
.panel {
  display: flex;
  flex-direction: column;
  align-items: center;
  justify-content: space-between;
  height: 64px;
  padding: 0 12px;
  border-right: 2px solid #ccc;
}
.panel:last-child { border: 0; }
.icons { display: flex; gap: 14px; height: 40px; }
.icons button { width: 40px; height: 40px; }
.icons svg { width: 40px; height: 40px; }
.icons .selected { width: 48px; height: 48px; margin-top: -4px; background: #0696df; }
.selected svg { width: 48px; height: 48px; }
.label { gap: 4px; padding: 0 7px 0 3px; line-height: 18px; }

.viewport { position: relative; flex: 1; min-height: 600px; background: #fff; }
.model { position: absolute; top: 121px; left: calc(50% - 153px); width: 450px; height: 400px; }
.viewcube { position: absolute; top: 16px; right: 6px; width: 110px; height: 115px; }
.navbar {
  position: absolute;
  bottom: 7px;
  left: 50%;
  display: flex;
  align-items: center;
  gap: 13px;
  width: 297px;
  height: 30px;
  padding-left: 5px;
  background: #f1f1f1;
  transform: translateX(-50%);
}
.with-caret { gap: 4px; margin-right: -4px; }

.timeline {
  display: flex;
  align-items: flex-start;
  height: 63px;
  border-top: 4px solid #ccc;
}
.playback { display: flex; gap: 16px; width: 178px; padding: 20px 0 0 14px; }
.playback svg { width: 15px; height: 20px; fill: #606060; }
.features {
  display: grid;
  grid-template-columns: repeat(28, 1fr);
  width: 843px;
  margin: 19px 0 0;
  padding: 0;
  list-style: none;
}
.features li { position: relative; height: 34px; }
.features li svg { width: 20px; height: 20px; margin: 0 auto; }
.features li::before { position: absolute; top: 24px; left: 50%; width: 3px; height: 7px; background: #ccc; content: ""; }
.features li::after { position: absolute; top: 30px; right: 0; left: 0; height: 3px; background: #ccc; content: ""; }
.features li:first-child::after { left: 50%; }
.features li:last-child::after { right: 50%; }
.marker { width: 16px; height: 40px; margin: 11px 0 0 -9px; }
.settings { margin: 20px 18px 0 auto; }
```
